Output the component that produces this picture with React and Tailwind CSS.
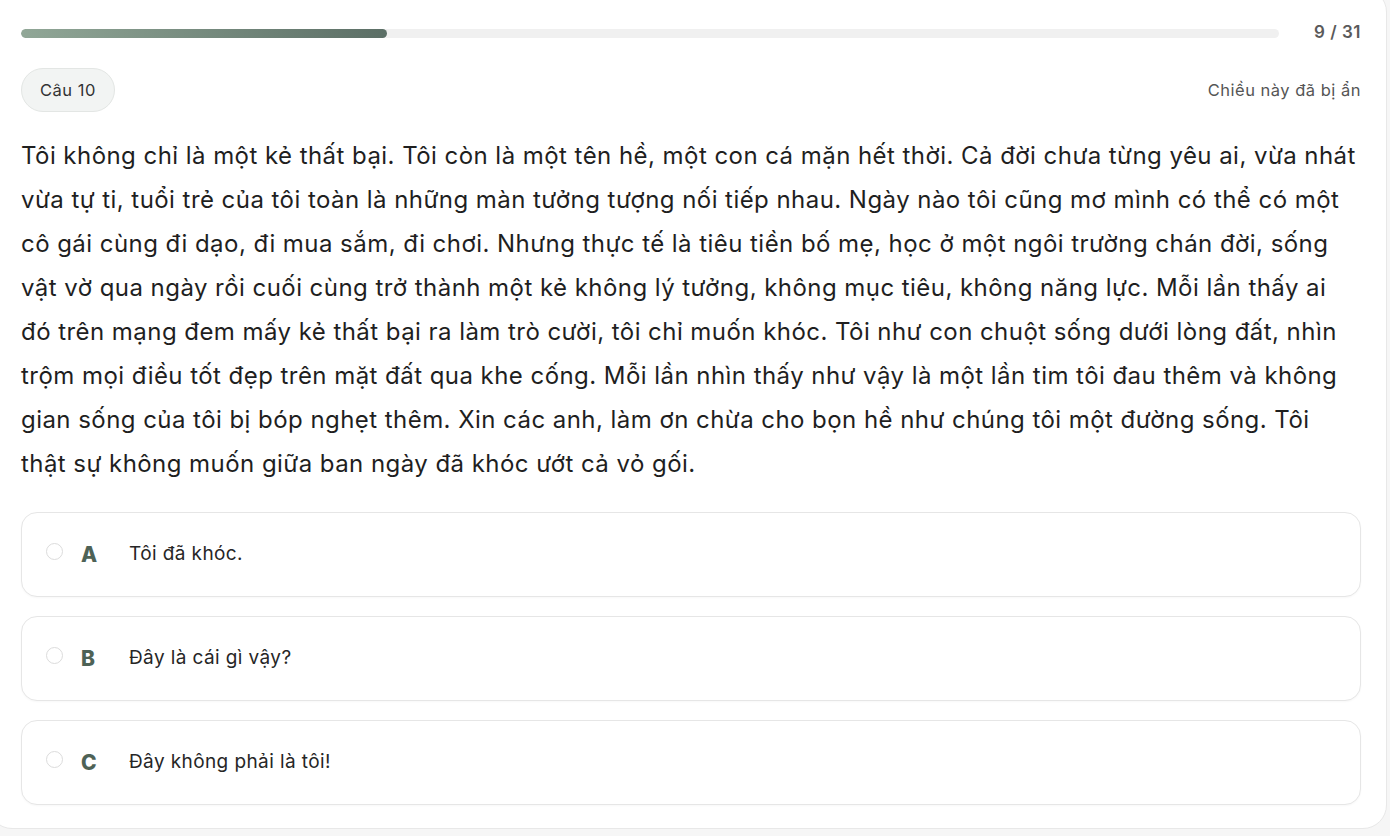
import React from 'react';

const options = [
  { key: 'A', text: 'Tôi đã khóc.' },
  { key: 'B', text: 'Đây là cái gì vậy?' },
  { key: 'C', text: 'Đây không phải là tôi!' },
];

const Option = ({ letter, text }) => (
  <div className="flex items-center h-[85px] rounded-[16px] border border-[#e6e6e6] bg-white pl-[24px] shadow-[0_1px_2px_rgba(0,0,0,0.03)]">
    <span className="w-[17px] h-[17px] rounded-full border border-[#dcdcdc] bg-white -mt-[6px]"></span>
    <span className="ml-[18px] w-[48px] text-[21px] font-extrabold text-[#4e6256]">{letter}</span>
    <span className="text-[19px] tracking-[0.4px] text-[#262626]">{text}</span>
  </div>
);

const App = () => {
  return (
    <div className="w-[1390px] h-[836px] overflow-hidden bg-[#f6f6f6] font-['Inter','Liberation_Sans',sans-serif]">
      <div className="-ml-[12px] -mt-[12px] w-[1399px] h-[841px] rounded-[24px] border border-[#e8e8e8] bg-white pl-[32px] pr-[25px] pt-[31px]">
        <div className="flex items-center h-[26px]">
          <div className="flex-1 h-[9px] rounded-full bg-[#f0f0f0] overflow-hidden">
            <div className="h-full w-[29.1%] rounded-full bg-gradient-to-r from-[#91a797] to-[#5c6f66]"></div>
          </div>
          <div className="w-[82px] text-right text-[17px] tracking-[0.5px] font-semibold text-[#5a5a5a]">9 / 31</div>
        </div>

        <div className="mt-[22px] flex items-center justify-between">
          <div className="h-[44px] px-[18px] flex items-center rounded-full bg-[#f2f4f3] border border-[#e3e6e4] text-[16.5px] tracking-[0.5px] text-[#333]">
            Câu 10
          </div>
          <div className="text-[16.5px] tracking-[0.5px] text-[#555]">Chiều này đã bị ẩn</div>
        </div>

        <p className="mt-[22px] text-[24px] leading-[44px] text-[#1f1f1f] tracking-[0.45px]">
          Tôi không chỉ là một kẻ thất bại. Tôi còn là một tên hề, một con cá mặn hết thời. Cả đời chưa từng yêu ai, vừa nhát vừa tự ti, tuổi trẻ của tôi toàn là những màn tưởng tượng nối tiếp nhau. Ngày nào tôi cũng mơ mình có thể có một cô gái cùng đi dạo, đi mua sắm, đi chơi. Nhưng thực tế là tiêu tiền bố mẹ, học ở một ngôi trường chán đời, sống vật vờ qua ngày rồi cuối cùng trở thành một kẻ không lý tưởng, không mục tiêu, không năng lực. Mỗi lần thấy ai đó trên mạng đem mấy kẻ thất bại ra làm trò cười, tôi chỉ muốn khóc. Tôi như con chuột sống dưới lòng đất, nhìn trộm mọi điều tốt đẹp trên mặt đất qua khe cống. Mỗi lần nhìn thấy như vậy là một lần tim tôi đau thêm và không gian sống của tôi bị bóp nghẹt thêm. Xin các anh, làm ơn chừa cho bọn hề như chúng tôi một đường sống. Tôi thật sự không muốn giữa ban ngày đã khóc ướt cả vỏ gối.
        </p>

        <div className="mt-[26px] flex flex-col gap-[19px]">
          {options.map(o => (
            <Option key={o.key} letter={o.key} text={o.text} />
          ))}
        </div>
      </div>
    </div>
  );
};

export default App;
